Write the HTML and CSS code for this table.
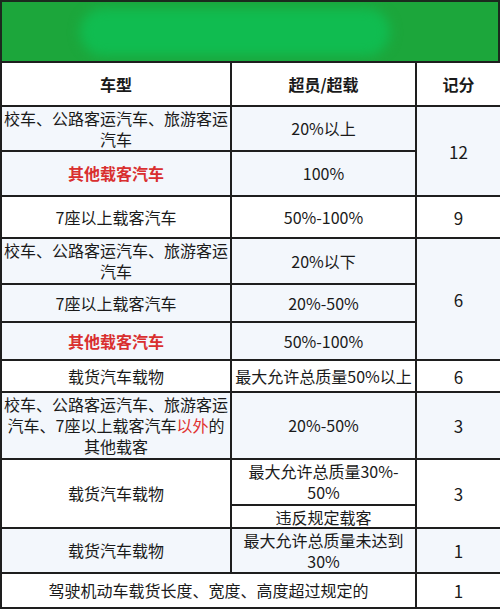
FILE: index.html
```html
<!DOCTYPE html>
<html lang="zh-CN">
<head>
<meta charset="utf-8">
<title>超员超载记分</title>
<link rel="stylesheet" href="styles.css">
</head>
<body>
<div class="sheet">
  <div class="banner"><div class="blob"></div></div>
  <table class="grid">
    <colgroup>
      <col class="c1">
      <col class="c2">
      <col class="c3">
    </colgroup>
    <thead>
      <tr class="h44">
        <th>车型</th>
        <th>超员/超载</th>
        <th>记分</th>
      </tr>
    </thead>
    <tbody>
      <tr class="h45 tint">
        <td>校车、公路客运汽车、旅游客运汽车</td>
        <td>20%以上</td>
        <td rowspan="2" class="num">12</td>
      </tr>
      <tr class="h45 tint">
        <td class="red">其他载客汽车</td>
        <td>100%</td>
      </tr>
      <tr class="h42">
        <td>7座以上载客汽车</td>
        <td>50%-100%</td>
        <td class="num">9</td>
      </tr>
      <tr class="h46 tint">
        <td>校车、公路客运汽车、旅游客运汽车</td>
        <td>20%以下</td>
        <td rowspan="3" class="num">6</td>
      </tr>
      <tr class="h38 tint">
        <td>7座以上载客汽车</td>
        <td>20%-50%</td>
      </tr>
      <tr class="h38 tint">
        <td class="red">其他载客汽车</td>
        <td>50%-100%</td>
      </tr>
      <tr class="h32">
        <td>载货汽车载物</td>
        <td>最大允许总质量50%以上</td>
        <td class="num">6</td>
      </tr>
      <tr class="h67 tint">
        <td>校车、公路客运汽车、旅游客运汽车、7座以上载客汽车<span class="redtxt">以外</span>的其他载客</td>
        <td>20%-50%</td>
        <td class="num">3</td>
      </tr>
      <tr class="h46">
        <td rowspan="2">载货汽车载物</td>
        <td>最大允许总质量30%-<br>50%</td>
        <td rowspan="2" class="num">3</td>
      </tr>
      <tr class="h23">
        <td class="tight">违反规定载客</td>
      </tr>
      <tr class="h45 tint">
        <td>载货汽车载物</td>
        <td>最大允许总质量未达到<br>30%</td>
        <td class="num">1</td>
      </tr>
      <tr class="h35">
        <td colspan="2">驾驶机动车载货长度、宽度、高度超过规定的</td>
        <td class="num">1</td>
      </tr>
    </tbody>
  </table>
</div>
</body>
</html>
```
FILE: styles.css
```css
html, body {
  margin: 0;
  padding: 0;
  background: #ffffff;
}

.sheet {
  width: 500px;
  font-family: "Noto Sans CJK SC", "Noto Sans", sans-serif;
  color: #1a1a1a;
}

.banner {
  box-sizing: border-box;
  height: 61px;
  border: 2px solid #1b2a1e;
  border-bottom: none;
  background: #1ca63b;
  display: flex;
  align-items: center;
  justify-content: center;
  overflow: hidden;
}

.blob {
  width: 310px;
  height: 48px;
  margin-right: 30px;
  border-radius: 24px;
  background: #10bc50;
  filter: blur(6px);
}

.grid {
  width: 500px;
  border-collapse: collapse;
  table-layout: fixed;
  font-size: 16px;
  line-height: 21px;
}

.c1 { width: 230px; }
.c2 { width: 185px; }
.c3 { width: 85px; }

.grid th,
.grid td {
  border: 2px solid #1e1e1e;
  padding: 0 1px;
  text-align: center;
  vertical-align: middle;
  background: #ffffff;
}

.grid th {
  font-weight: 700;
}

.grid .tint td {
  background: #f3f7fc;
}

.grid td.num {
  font-size: 17px;
}

.grid td.red {
  color: #d92f2f;
  font-weight: 700;
}

.redtxt {
  color: #e0312f;
}

.grid td.tight {
  line-height: 18px;
}

.h44 { height: 44px; }
.h45 { height: 45px; }
.h42 { height: 42px; }
.h46 { height: 46px; }
.h38 { height: 38px; }
.h32 { height: 32px; }
.h67 { height: 67px; }
.h23 { height: 23px; }
.h35 { height: 35px; }
```
